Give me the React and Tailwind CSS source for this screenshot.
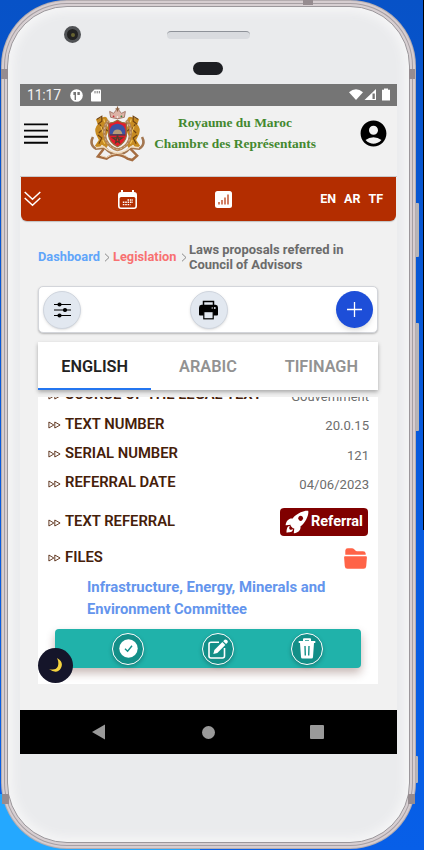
import React from "react";
import { IoRocketSharp } from "react-icons/io5";
import { MdAccountCircle } from "react-icons/md";

const rows = [
  ["TEXT NUMBER", "20.0.15"],
  ["SERIAL NUMBER", "121"],
  ["REFERRAL DATE", "04/06/2023"],
];

function Arrows() {
  return (
    <svg width="13" height="8" viewBox="0 0 13 8" className="mt-[3px] mr-[4px] shrink-0" fill="none" stroke="#54270f" strokeWidth="0.9" strokeLinejoin="round">
      <path d="M.9 1 L5.8 4 L.9 7Z" />
      <path d="M6.8 1 L12.1 4 L6.8 7Z" />
    </svg>
  );
}

function Label({ children }) {
  return (
    <div className="flex items-center pb-[2px] text-[14.8px] font-semibold whitespace-nowrap text-[#452009]">
      <Arrows />
      <span>{children}</span>
    </div>
  );
}

function Lion() {
  return (
    <g>
      <path d="M13 11 Q17 9 18 13 L16 17 Q20 21 18 27 L15 33 L19 38 L17 42 L12 39 L9 43 L5 40 L9 34 L6 28 Q4 22 8 18 L6 13 Z" fill="#c78b22" />
      <path d="M7 13 L12 10 L12 15 L8 18 M10 18 L13 23 L9 27 M8 29 L12 32 L9 38 M15 22 L18 25" stroke="#6f4312" strokeWidth="1.2" fill="none" />
      <path d="M14 13 L15 16 M11 20 L14 28 M13 34 L15 38" stroke="#f0c35a" strokeWidth="1.2" />
    </g>
  );
}

function Emblem() {
  return (
    <svg width="55" height="56" viewBox="0 0 56 56" className="shrink-0">
      <Lion />
      <g transform="translate(56 0) scale(-1 1)"><Lion /></g>
      <path d="M19 14 Q12 22 16 34 Q20 42 28 44 Q37 42 40 34 Q44 22 37 14" fill="none" stroke="#b18355" strokeWidth="3" />
      <path d="M19 14 Q12 22 16 34 Q20 42 28 44 Q37 42 40 34 Q44 22 37 14" fill="none" stroke="#ecd2a8" strokeWidth="0.7" strokeDasharray="2 2" />
      <path d="M19 17 Q24 17 28 14 Q32 17 37 17 L37 30 Q36 37 28 41 Q20 37 19 30Z" fill="#e51c2b" stroke="#9b6a3b" strokeWidth="1.3" />
      <path d="M20 26 Q20 18 28 17.5 Q36 18 36 26 L36 29 L20 29Z" fill="#3c53a5" />
      <path d="M23 28 Q24 23.5 28 23.5 Q32 23.5 33 28Z" fill="#b59a78" />
      <path d="M20 29 H36" stroke="#5c3a4a" strokeWidth="1.5" />
      <path d="M28 29 L30 37 L23 32 H33 L26 37Z" fill="none" stroke="#54402c" strokeWidth="1.2" />
      <path d="M21 11 L20 5 L24 7 L28 2 L32 7 L36 5 L35 11 Q28 14 21 11Z" fill="#dcb3a6" stroke="#a3786a" strokeWidth="1" />
      <path d="M28 0 V5 M26 2.5 H30" stroke="#8d6342" strokeWidth="1.2" />
      <circle cx="24" cy="10" r="0.9" fill="#cf2637" /><circle cx="28" cy="10.6" r="0.8" fill="#fff" /><circle cx="32" cy="10" r="0.9" fill="#36843e" />
      <path d="M3 31 Q-1 39 6 43 L15 42 Q22 49 28 49 Q35 49 41 42 L50 43 Q57 39 53 31" fill="none" stroke="#a37650" strokeWidth="2.6" />
      <path d="M6 42 L14 41 Q21 47 28 47 Q35 47 42 41 L50 42" fill="none" stroke="#f1ddc0" strokeWidth="1.5" />
      <path d="M14 43 L8 51 L17 53 Q27 45 38 53 L43 54.5 L48 50 L41 43" fill="none" stroke="#a66e42" strokeWidth="2.5" />
      <path d="M11 50 L17 52 Q27 44 38 51" fill="none" stroke="#efd5b4" strokeWidth="1" />
    </svg>
  );
}

function StatusBar() {
  return (
    <div className="flex h-[22px] shrink-0 items-center bg-[#757575] pr-[6px] pl-[7px] text-white">
      <span className="w-[43px] text-[14px] leading-none text-[#f2f2f2] tracking-[-0.2px]">11:17</span>
      <svg width="13" height="13" viewBox="0 0 13 13"><circle cx="6.5" cy="6.5" r="6.3" fill="#fff" /><path d="M3.4 3H6V11H4.6V6H3.4Z M7.4 3H9.8V6H7.4Z" fill="#757575" /></svg>
      <svg className="ml-[8px]" width="10" height="13" viewBox="0 0 10 13"><path d="M3.5 .5H9Q10 .5 10 1.5V12Q10 12.5 9.3 12.5H.8Q0 12.5 0 11.8V4Z" fill="#fff" /><path d="M4 2V4.4M6.2 2V4.4M8.3 2V4.4" stroke="#757575" /></svg>
      <svg className="ml-auto" width="42" height="14" viewBox="0 0 42 14">
        <path d="M0 4.2Q7 -1.8 14 4.2L7 12Z" fill="#fff" />
        <path d="M15.5 12L27 1V12Z" fill="#fff" /><path d="M23.5 5.5H25.8V11H23.5Z" fill="#757575" />
        <path d="M35 1.8V.5H39V1.8H41V12.5H33V1.8Z" fill="#fff" />
      </svg>
    </div>
  );
}

function Header() {
  return (
    <div className="flex h-[71px] shrink-0 items-start border-b border-[#c9c9cb] bg-[#f1f1f1] pr-[8px] pl-1">
      <svg className="mt-[16px]" width="25" height="22" viewBox="0 0 25 22" stroke="#050505" strokeWidth="1.9"><path d="M0 2.4H24M0 8.6H24M0 14.7H24M0 20.8H24" /></svg>
      <div className="ml-[41px]"><Emblem /></div>
      <div className="ml-[8px] w-[164px] pt-[7px] text-center font-['Liberation_Serif',serif] text-[13.45px] leading-[20.5px] font-bold whitespace-nowrap text-[#43882f]">
        <div>Royaume du Maroc</div>
        <div>Chambre des Représentants</div>
      </div>
      <MdAccountCircle className="mt-[12px] ml-auto size-[31px] text-black" />
    </div>
  );
}

function RedBar() {
  return (
    <div className="mx-px flex h-[44px] shrink-0 items-center rounded-b-[6px] bg-[#b32d00] pr-[13px] pl-[3px] text-white shadow-[0_1px_1px_rgba(0,0,0,.2)]">
      <svg width="17" height="16" viewBox="0 0 17 16" fill="none" stroke="white" strokeWidth="1.5"><path d="M.7 1L8.5 8.2L16.3 1M.7 7L8.5 14.2L16.3 7" /></svg>
      <svg className="ml-[77px]" width="19" height="19" viewBox="0 0 19 19">
        <path d="M3 0H5V2H14V0H16V2Q19 2 19 5V16Q19 19 16 19H3Q0 19 0 16V5Q0 2 3 2Z" fill="#fff" />
        <rect x="1.6" y="7" width="15.8" height="10.5" rx="1.5" fill="#b32d00" />
        <path d="M9.5 10H15M4.8 12.3H15M4.8 14.6H12.5" stroke="#fff" strokeWidth="1.4" strokeDasharray="1.6 .8" />
      </svg>
      <svg className="ml-[78px]" width="17" height="17" viewBox="0 0 17 17"><rect width="17" height="17" rx="2.5" fill="#fff" /><path d="M4 11V13.5M7 9V13.5M10 6.5V13.5M13 3.5V13.5" stroke="#b32d00" strokeWidth="1.2" /></svg>
      <div className="ml-auto flex gap-[8px] text-[12.5px] font-bold"><span>EN</span><span>AR</span><span>TF</span></div>
    </div>
  );
}

function Chevron() {
  return <svg width="6" height="9" viewBox="0 0 6 9" fill="none" stroke="#8a8a8a" strokeWidth="1"><path d="M1 .7L5 4.5L1 8.3" /></svg>;
}

function Breadcrumb() {
  return (
    <div className="flex h-[65px] items-center pt-[7px] text-[12.8px] font-bold whitespace-nowrap">
      <span className="w-[62px] text-[#60a5fa]">Dashboard</span>
      <span className="mr-[3px] ml-[4px]"><Chevron /></span>
      <span className="w-[64px] text-[#f87171]">Legislation</span>
      <span className="mr-[2px] ml-[4px]"><Chevron /></span>
      <span className="text-[12.95px] leading-[15px] text-[#6b6b6b]">Laws proposals referred in<br />Council of Advisors</span>
    </div>
  );
}

function Toolbar() {
  return (
    <div className="flex h-[47px] items-center justify-between rounded-[5px] border border-[#d3d5da] bg-white px-[4px] shadow-[0_1px_2px_rgba(0,0,0,.25)]">
      <div className="flex size-[38px] items-center justify-center rounded-full border border-[#cfd5de] bg-[#e2e8f0] shadow-sm">
        <svg width="17" height="16" viewBox="0 0 17 16" fill="#000" stroke="#000" strokeWidth="1.2"><path d="M0 2.5H17M0 8H17M0 13.5H17" /><circle cx="5.5" cy="2.5" r="1.5" /><circle cx="11" cy="8" r="1.5" /><circle cx="5.5" cy="13.5" r="1.5" /></svg>
      </div>
      <div className="flex size-[38px] items-center justify-center rounded-full border border-[#cfd5de] bg-[#e2e8f0] shadow-sm">
        <svg width="19" height="20" viewBox="0 0 19 20">
          <path d="M4.5 5V1.5H14.5V5" fill="none" stroke="#000" strokeWidth="1.5" />
          <path d="M2.5 4.8H16.5Q19 5 19 7.5V14.5Q19 15.5 18 15.5H1Q0 15.5 0 14.5V7.5Q0 5 2.5 4.8Z" fill="#000" />
          <rect x="4.8" y="11.6" width="9.4" height="7.2" fill="#e2e8f0" stroke="#000" strokeWidth="1.2" />
          <circle cx="13.2" cy="8" r=".7" fill="#e2e8f0" /><circle cx="15.8" cy="8" r=".9" fill="#e2e8f0" />
        </svg>
      </div>
      <div className="flex size-[37px] items-center justify-center rounded-full bg-[#1d4ed8] shadow-md">
        <svg width="15" height="15" viewBox="0 0 15 15" stroke="#fff" strokeWidth="1.3"><path d="M0 7.5H15M7.5 0V15" /></svg>
      </div>
    </div>
  );
}

function Tabs() {
  return (
    <div className="relative z-10 mt-[9px] grid h-[48px] grid-cols-3 bg-white text-center text-[16.3px] leading-[50px] font-semibold text-[#929292] shadow-[0_2px_4px_rgba(0,0,0,.3)]">
      <span className="h-[48px] border-b-2 border-[#2476f0] text-[#222]">ENGLISH</span>
      <span>ARABIC</span>
      <span>TIFINAGH</span>
    </div>
  );
}

function Action({ children }) {
  return <div className="flex size-[32px] items-center justify-center rounded-full border border-white bg-[#138f88] shadow-[0_2px_4px_rgba(0,0,0,.25)]">{children}</div>;
}

function List() {
  return (
    <div className="mt-[7px] h-[287px] overflow-hidden bg-white">
      <div className="-mt-[16px] flex h-[29px] items-center justify-between pr-[9px] pl-[10px]">
        <Label>SOURCE OF THE LEGAL TEXT</Label><span className="pt-[2px] text-[13px] text-[#6d6d6d]">Gouvernment</span>
      </div>
      {rows.map(([a, b]) => (
        <div key={a} className="flex h-[29.3px] items-center justify-between pr-[9px] pl-[10px]">
          <Label>{a}</Label><span className="pt-[3px] text-[13.1px] text-[#6d6d6d]">{b}</span>
        </div>
      ))}
      <div className="flex h-[47px] items-center justify-between pr-[10px] pl-[10px]">
        <div className="pt-[2px]"><Label>TEXT REFERRAL</Label></div>
        <div className="mt-[1px] flex h-[28px] w-[88px] items-center rounded-[4px] bg-[#800000] pl-[4px] text-white">
          <IoRocketSharp className="size-[26px]" /><span className="ml-[1px] text-[14.5px] font-bold">Referral</span>
        </div>
      </div>
      <div className="flex h-[26px] items-center justify-between pr-[11px] pl-[10px]">
        <Label>FILES</Label>
        <svg className="mt-[1px]" width="23" height="21" viewBox="0 0 23 21" fill="#ff6347">
          <path d="M1.3 6.7V2.5Q1.5.3 3.7.3H8Q9.2.3 10.2 1.3L11.4 2.6Q12 3.2 13 3.2H19Q21.5 3.3 21.7 5.5V6.7Z" />
          <path d="M1 8.2H22Q23 8.2 22.9 9.4L22.2 18.2Q22 20.7 19.5 20.7H3.5Q1 20.7.8 18.2L.1 9.4Q0 8.2 1 8.2Z" />
        </svg>
      </div>
      <div className="mt-[5px] pl-[49px] text-[14.9px] leading-[22px] font-bold whitespace-nowrap text-[#6495ed]">Infrastructure, Energy, Minerals and<br /><span className="text-[14.7px]">Environment Committee</span></div>
      <div className="mt-[9px] ml-[17px] flex h-[39px] w-[306px] items-center justify-between rounded-[4px] bg-[#20b2aa] pt-px pr-[38px] pl-[57px] shadow-[0_5px_10px_rgba(70,20,10,.3)]">
        <Action><svg width="19" height="19" viewBox="0 0 19 19"><circle cx="9.5" cy="9.5" r="9.2" fill="#fff" /><path d="M6 9.8L8.6 12.3L13 6.7" fill="none" stroke="#138f88" strokeWidth="1.4" /></svg></Action>
        <Action>
          <svg width="20" height="20" viewBox="0 0 20 20">
            <path d="M11 3.3H3Q1 3.3 1 5.3V17Q1 19 3 19H14.5Q16.5 19 16.5 17V9" fill="none" stroke="#fff" strokeWidth="1.6" />
            <path d="M5.3 15L6.4 11L14.4 3L17.3 5.9L9.3 13.9Z" fill="#fff" />
            <path d="M15.2 2.2L16.6.8Q17.7 0 18.8 1.1L19.3 1.6Q20.3 2.7 19.4 3.8L18.1 5.1Z" fill="#fff" />
          </svg>
        </Action>
        <Action><svg width="18" height="21" viewBox="0 0 18 21"><path d="M.7 4H17.3M6 3V1.2H12V3" fill="none" stroke="#fff" strokeWidth="2" strokeLinejoin="round" /><path d="M2 5H16L15 19Q15 20.5 13.5 20.5H4.5Q3 20.5 3 19Z" fill="#fff" /><path d="M7 8L7.3 17.5M11 8L10.7 17.5" stroke="#138f88" strokeWidth="1.4" /></svg></Action>
      </div>
    </div>
  );
}

export default function App() {
  return (
    <div className="relative h-[850px] w-[424px] overflow-hidden bg-linear-to-b from-[#0752c7] via-[#0759dc] to-[#075fe8] font-[Roboto,sans-serif]">
      <div className="absolute top-0 right-0 h-[530px] w-px bg-black" />
      <div className="absolute bottom-0 left-0 h-[56px] w-[200px] bg-[#24a8ff]" />
      <div className="absolute top-[203px] left-[414px] h-[54px] w-[5px] rounded-[1px] bg-[#b7b5b8]" />
      <div className="absolute top-[323px] left-[414px] h-[108px] w-[5px] rounded-[1px] bg-[#b7b5b8]" />
      <div className="absolute top-[756px] left-[414px] h-[27px] w-[4px] rounded-[1px] bg-[#b7b5b8]" />
      <div className="absolute top-0 left-px h-[849px] w-[415px] rounded-[66px] bg-[#b5adb0] p-px">
        <div className="size-full rounded-[65px] bg-[#d6cdd0] p-[2px]">
          <div className="size-full rounded-[63px] bg-[#a69fa3] p-px">
            <div className="size-full rounded-[62px] bg-[#d7cfd2] p-[2px]">
              <div className="size-full rounded-[60px] border border-[#9b979b] bg-[#eaebed] shadow-[inset_0_0_10px_5px_#f5f5f6]" />
            </div>
          </div>
        </div>
      </div>
      <div className="absolute top-0 left-[303px] h-[5px] w-[10px] bg-[#968c90]" />
      <div className="absolute top-[69px] left-[1px] h-[10px] w-[7px] bg-[#968c90]" />
      <div className="absolute top-[69px] left-[409px] h-[10px] w-[6px] bg-[#968c90]" />
      <div className="absolute top-[794px] left-[2px] h-[10px] w-[7px] bg-[#968c90]" />
      <div className="absolute top-[794px] left-[408px] h-[10px] w-[7px] bg-[#968c90]" />
      <div className="absolute top-[26px] left-[64px] flex size-[17px] items-center justify-center rounded-full border-[3px] border-[#505255] bg-[#222]"><span className="size-[4px] rounded-full bg-[#666331]" /></div>
      <div className="absolute top-[31px] left-[167px] h-[8px] w-[83px] rounded-[4px] border-t border-[#8e9299] bg-[#d9dbdf]" />
      <div className="absolute top-[62px] left-[193px] h-[13px] w-[30px] rounded-full bg-[#1d1e22]" />
      <div className="absolute top-[84px] left-[20px] flex h-[670px] w-[377px] flex-col bg-[#f1f1f1]">
        <StatusBar />
        <Header />
        <RedBar />
        <div className="h-[489px] pr-[19px] pl-[18px]">
          <Breadcrumb />
          <Toolbar />
          <Tabs />
          <List />
        </div>
        <div className="flex h-[44px] shrink-0 items-center bg-black pl-[72px]">
          <svg width="13" height="16" viewBox="0 0 13 16"><path d="M0 8L13 .5V15.5Z" fill="#999" /></svg>
          <div className="ml-[97px] size-[13px] rounded-full bg-[#999]" />
          <div className="ml-[95px] size-[14px] rounded-[1px] bg-[#999]" />
        </div>
        <div className="absolute top-[564px] left-[18px] flex size-[35px] items-center justify-center rounded-full bg-[#15152a]">
          <svg width="15" height="15" viewBox="0 0 15 15"><path d="M9 0Q16 4 13 10Q9 17 1 11Q8 13 10 8Q11 4 9 0Z" fill="#f5d33f" /></svg>
        </div>
      </div>
    </div>
  );
}
